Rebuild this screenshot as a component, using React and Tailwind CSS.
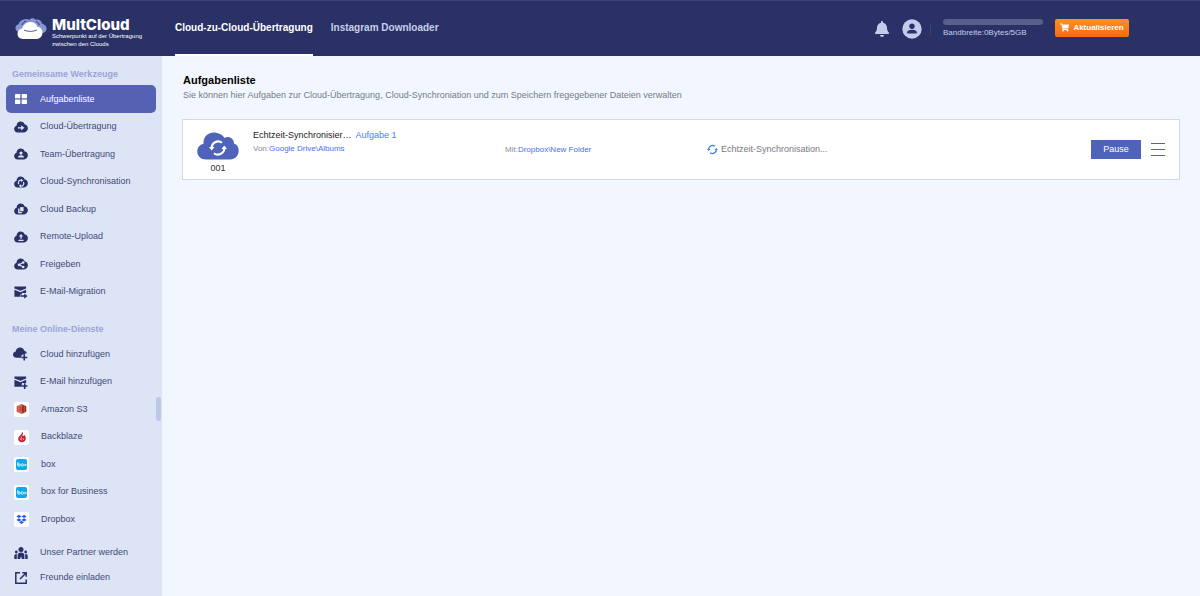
import React, { useState } from "react";
import { FaBell, FaShoppingCart } from "react-icons/fa";

const CLOUD =
  "M7.500.5c2.300 0 4 1.200 4.600 3.200 2.300.3 3.900 2.200 3.900 4.500 0 2.900-1.800 5.100-4.500 5.100H4.200C1.600 13.300 0 11.500 0 9.300c0-2 1.100-3.400 2.800-3.900C2.800 2.500 4.900.5 7.500.5z";

function CloudIcon({ children }) {
  return (
    <svg viewBox="0 0 16 14" className="w-[14px] h-[12px] text-[#2a3166]">
      <path d={CLOUD} fill="currentColor" />
      <g fill="none" stroke="#dde4f6" strokeWidth="1.600">{children}</g>
    </svg>
  );
}

function MailIcon({ children }) {
  return (
    <svg viewBox="0 0 15 15" className="w-[15px] h-[14px]">
      <path d="M1 1.500h12.500v2.200L7.500 6.200 1 3.700z" fill="#2a3166" />
      <path d="M1 5.200l6.500 2.500 6-2.500v3.300H9V12.500H1z" fill="#2a3166" />
      <g fill="none" stroke="#2a3166" strokeWidth="1.700">{children}</g>
    </svg>
  );
}

function GridIcon() {
  return (
    <svg viewBox="0 0 12 10" className="w-[12px] h-[10px]" fill="#fff">
      <rect width="5.300" height="4.300" rx=".4" />
      <rect x="6.700" width="5.300" height="4.300" rx=".4" />
      <rect y="5.600" width="5.300" height="4.300" rx=".4" />
      <rect x="6.700" y="5.600" width="5.300" height="4.300" rx=".4" />
    </svg>
  );
}

function CloudPlusIcon() {
  return (
    <svg viewBox="0 0 16 15" className="w-[15px] h-[14px]">
      <path d="M7.500.5c2.500 0 4.200 1.500 4.500 3.500 1.500.3 2.500 1.300 2.800 3H13v1.500h-3V11H8.500v.5H4C1.600 11.500 0 10.200 0 8.200c0-1.700 1.100-3 2.800-3.300C2.900 2.300 4.900.5 7.500.5z" fill="#2a3166" />
      <path d="M12 8v6.500M8.800 11.200h6.500" stroke="#dde4f6" strokeWidth="4" />
      <path d="M12 8v6.500M8.800 11.200h6.500" stroke="#2a3166" strokeWidth="1.700" />
    </svg>
  );
}

function Tile({ children }) {
  return (
    <span className="flex h-[15px] w-[15px] items-center justify-center rounded-[2px] bg-white">
      {children}
    </span>
  );
}

function S3Icon() {
  return (
    <Tile>
      <svg viewBox="0 0 12 12" className="h-[12px] w-[11px]">
        <path d="M.8 3L3 2v8L.8 9z" fill="#c8472f" />
        <path d="M11.200 3L9 2v8l2.200-1z" fill="#8c2a1b" />
        <path d="M3 1.800L6 .5v11L3 10.200z" fill="#e0604a" />
        <path d="M9 1.800L6 .5v11l3-1.300z" fill="#a83425" />
        <path d="M4.200 4.800h3.600M4.200 7.200h3.600" stroke="#7f2218" strokeWidth=".7" />
      </svg>
    </Tile>
  );
}

function BackblazeIcon() {
  return (
    <Tile>
      <svg viewBox="0 0 12 14" className="h-[12px] w-[10px]">
        <path d="M6.200.5c1.400 1.700 1 3 .4 4.300 0 1 .7 1.500 1.500.8.3-.3.400-.8.300-1.300 1.500 1.200 2.300 2.800 2.100 4.700-.3 2.500-2.200 4.300-4.700 4.300C3.200 13.300 1.300 11.400 1.500 9c.1-1.700 1.300-2.800 2.500-4C5.400 3.600 6.300 2.300 6.200.5z" fill="#c8202f" />
        <path d="M5 6.500c1 1.500-.6 2-.5 3.200.1.800.8 1.200 1.500 1M7.200 8.500c.8.800.6 1.600 0 2.200" stroke="#fff" strokeWidth=".9" fill="none" />
      </svg>
    </Tile>
  );
}

function BoxIcon() {
  return (
    <Tile>
      <span className="flex h-[11px] w-[11px] items-center justify-center rounded-[2px] bg-[#0aa9ea]">
        <svg viewBox="0 0 20 10" className="h-[5px] w-[10px]" fill="none" stroke="#fff" strokeWidth="1.600">
          <path d="M1.500 0v6" />
          <circle cx="4" cy="6" r="2.500" />
          <circle cx="10.500" cy="6" r="2.500" />
          <path d="M14.500 3.500l4.500 5M19 3.500l-4.500 5" />
        </svg>
      </span>
    </Tile>
  );
}

function DropboxIcon() {
  return (
    <Tile>
      <svg viewBox="0 0 12 11" className="h-[11px] w-[11px]" fill="#2458f0">
        <path d="M3.200.3L6 2.100 3.200 3.900.4 2.100zM8.800.3l2.800 1.800-2.800 1.800L6 2.100zM3.200 4.200L6 6 3.200 7.800.4 6zM8.800 4.200L11.600 6 8.800 7.800 6 6zM6 6.900l2.600 1.700L6 10.400 3.400 8.600z" />
      </svg>
    </Tile>
  );
}

function PartnerIcon() {
  return (
    <svg viewBox="0 0 14 12" className="h-[12px] w-[14px]" fill="#2a3166">
      <circle cx="7" cy="2.600" r="2.500" />
      <circle cx="2.300" cy="5" r="1.400" />
      <circle cx="11.700" cy="5" r="1.400" />
      <path d="M3.600 12V8.500c0-1.800 1.200-3 3.400-3s3.400 1.200 3.400 3V12H8L7 9.500 6 12zM.3 12V9c0-1.300.9-2.200 2.500-2.100V12zM13.700 12V9c0-1.300-.9-2.200-2.500-2.100V12z" />
    </svg>
  );
}

function InviteIcon() {
  return (
    <svg viewBox="0 0 12 12" className="h-[12px] w-[12px]" fill="none" stroke="#2a3166" strokeWidth="1.500">
      <path d="M5 .8H.8v10.400h10.400V7.500" />
      <path d="M5 7L11 1M7.200.8h4v4" />
    </svg>
  );
}

// two arrows running round in a circle
function SyncArrows({ className }) {
  return (
    <svg viewBox="0 0 20 20" className={className}>
      <path d="M3 10.500A7.200 7.200 0 0 1 14.500 4.200M17 9.500A7.200 7.200 0 0 1 5.500 15.800" fill="none" stroke="currentColor" strokeWidth="2.300" />
      <path d="M0 9h6.200L3 12.800zM20 11h-6.200L17 7.200z" fill="currentColor" />
    </svg>
  );
}

const tools = [
  { name: "Aufgabenliste", icon: <GridIcon /> },
  { name: "Cloud-Übertragung", icon: <CloudIcon><path d="M4.500 8h4.500" /><path d="M8.200 4.900L12 8l-3.800 3.100z" fill="#dde4f6" stroke="none" /></CloudIcon> },
  { name: "Team-Übertragung", icon: <CloudIcon><circle cx="8" cy="5.900" r="1.900" fill="#dde4f6" stroke="none" /><path d="M4.500 11c0-3.500 7-3.500 7 0z" fill="#dde4f6" stroke="none" /></CloudIcon> },
  { name: "Cloud-Synchronisation", icon: <CloudIcon><path d="M5.400 9.500A3 3 0 0 1 9 5M10.700 7a3 3 0 0 1-3.600 4.500" strokeWidth="1.400" /><path d="M8.200 3.200l2.500 2-2.500 1.800zM7.900 9.500l-2.500 2 2.500 1.800z" fill="#dde4f6" stroke="none" /></CloudIcon> },
  { name: "Cloud Backup", icon: <CloudIcon><path d="M5.500 6.500v4.700h3.500" /><path d="M7 4.800h4v4.800H7z" fill="#dde4f6" stroke="none" /></CloudIcon> },
  { name: "Remote-Upload", icon: <CloudIcon><path d="M8 5v4M5 11h6" /><path d="M5.500 6.500L8 3.500l2.500 3z" fill="#dde4f6" stroke="none" /></CloudIcon> },
  { name: "Freigeben", icon: <CloudIcon><path d="M10.500 5.300L5.800 7.900l4.700 2.600" strokeWidth="1.200" /><g fill="#dde4f6" stroke="none"><circle cx="10.600" cy="5.300" r="1.500" /><circle cx="5.800" cy="7.900" r="1.600" /><circle cx="10.600" cy="10.500" r="1.500" /></g></CloudIcon> },
  { name: "E-Mail-Migration", icon: <MailIcon><path d="M7.500 11.800H13" stroke="#dde4f6" strokeWidth="3.500" /><path d="M8 11.800H13" /><path d="M11.500 9l3.500 2.800-3.500 2.800z" fill="#2a3166" stroke="none" /></MailIcon> },
];

const services = [
  { name: "Cloud hinzufügen", icon: <CloudPlusIcon /> },
  { name: "E-Mail hinzufügen", icon: <MailIcon><path d="M12 8.500V15M9 11.800h6" stroke="#dde4f6" strokeWidth="3.500" /><path d="M12 8.800V15M9 11.800h6" /></MailIcon> },
  { name: "Amazon S3", icon: <S3Icon />, brand: true },
  { name: "Backblaze", icon: <BackblazeIcon />, brand: true },
  { name: "box", icon: <BoxIcon />, brand: true },
  { name: "box for Business", icon: <BoxIcon />, brand: true },
  { name: "Dropbox", icon: <DropboxIcon />, brand: true },
];

const more = [
  { name: "Unser Partner werden", icon: <PartnerIcon /> },
  { name: "Freunde einladen", icon: <InviteIcon /> },
];

function NavItem({ item, active, onClick }) {
  return (
    <li className="flex-1">
      <a
        href="#"
        onClick={onClick}
        className={`flex h-full items-center gap-3 rounded-[5px] pt-px text-[9px] ${item.brand ? "pl-2" : "pl-[7px]"} ${
          active ? "bg-[#5562b3] text-white" : "text-[#3f4a75]"
        }`}
      >
        <span className="flex w-[15px] justify-center">{item.icon}</span>
        {item.name}
      </a>
    </li>
  );
}

function Header() {
  return (
    <header className="flex h-14 items-stretch border-t border-[#3b4276] bg-[#2a3166] text-white">
      <a href="#" className="flex w-[175px] shrink-0 items-center gap-[5px] pl-[15px] pt-2">
        <svg viewBox="0 0 32 22" className="mb-2 h-[22px] w-[32px] shrink-0">
          <path d="M8.500 1.500c2-1 4.500-.5 5.500.5C16-.3 19.500 0 20.500 1.800c3-.8 6 .7 6.500 3.700 3 1 5 3.500 4.500 6C31 14 29 15 27 15L4 14C1.500 13.500 0 11.500.5 9.500.8 7.800 2 6.700 3.500 6.300 4 4 6 2 8.500 1.500z" fill="#8795d3" />
          <path d="M7 7C8 4.500 9.500 3.500 11.500 3M21 3.500c2 .8 3 2 3.300 3.500" stroke="#2a3166" fill="none" />
          <path d="M15.500 4c3.500 0 6 2 6.700 4.800 3.200.2 5.300 2.600 5.300 5.700 0 3.500-2.300 6.500-6 6.500H8c-3.500 0-5.500-2.400-5.500-5.200 0-2.900 2-5 4.700-5.300C8.300 6.500 11.500 4 15.500 4z" fill="#fff" />
          <path d="M9 12.200c4 1.600 9 1.600 12.800-.2" stroke="#2a3166" strokeWidth=".8" fill="none" />
        </svg>
        <span className="whitespace-nowrap">
          <span className="block font-['Inter',sans-serif] text-[15px] font-extrabold leading-[14px]">MultCloud</span>
          <span className="block text-[6px] leading-[8px]">
            Schwerpunkt auf der Übertragung
            <br />
            zwischen den Clouds
          </span>
        </span>
      </a>
      <nav className="flex gap-[18px] whitespace-nowrap text-[10px] font-bold">
        <a href="#" className="flex items-center border-b-2 border-white">Cloud-zu-Cloud-Übertragung</a>
        <a href="#" className="flex items-center border-b-2 border-transparent text-[#c6cfea]">Instagram Downloader</a>
      </nav>
      <div className="ml-auto flex items-center pr-[71px]">
        <button aria-label="Benachrichtigungen" className="mr-3">
          <FaBell className="h-4 w-4 text-[#c3cdeb]" />
        </button>
        <button aria-label="Konto">
          <svg viewBox="0 0 20 20" className="h-5 w-5">
            <circle cx="10" cy="10" r="9.700" fill="#c3cdeb" />
            <circle cx="10" cy="7.300" r="2.700" fill="#2a3166" />
            <path d="M5.200 14.500v-1c0-2 1.800-2.800 4.800-2.800s4.800.8 4.800 2.800v1z" fill="#2a3166" />
          </svg>
        </button>
        <span className="mx-2 h-[10px] w-px bg-[#3b4276]" />
        <div className="ml-1 w-[100px]">
          <div className="h-[6px] rounded-full bg-[#585f8b]" />
          <p className="mt-[3px] whitespace-nowrap text-[8px] leading-[10px] text-[#c6cfea]">Bandbreite:0Bytes/5GB</p>
        </div>
        <button className="mb-[2px] ml-3 flex h-[18px] w-[74px] items-center justify-center gap-1 rounded-[2px] bg-linear-to-b from-[#ff9020] to-[#fa6a14] text-[8px] font-bold">
          <FaShoppingCart className="h-[9px] w-[9px]" />
          Aktualisieren
        </button>
      </div>
    </header>
  );
}

function Sidebar() {
  const [current, setCurrent] = useState("Aufgabenliste");

  const renderItems = (items) =>
    items.map((item) => (
      <NavItem key={item.name} item={item} active={item.name === current} onClick={() => setCurrent(item.name)} />
    ));

  return (
    <aside className="relative w-[162px] shrink-0 bg-[#dde4f6] px-[6px] pt-3">
      <h2 className="pl-[6px] text-[9px] font-bold leading-[12px] text-[#9aa5d6]">Gemeinsame Werkzeuge</h2>
      <ul className="mt-[5px] flex h-[220px] flex-col">{renderItems(tools)}</ul>
      <h2 className="mt-[18px] pl-[6px] text-[9px] font-bold leading-[12px] text-[#9aa5d6]">Meine Online-Dienste</h2>
      <ul className="mt-[5px] flex h-[193px] flex-col">{renderItems(services)}</ul>
      <ul className="mt-[7px] flex h-[50px] flex-col">{renderItems(more)}</ul>
      <span className="absolute right-[1px] top-[341px] h-6 w-[5px] rounded-full bg-[#bcc8e6]" />
    </aside>
  );
}

function Task() {
  return (
    <article className="mt-[17px] flex h-[61px] items-center border border-[#cfd9ee] bg-white px-[14px]">
      <div className="flex w-[42px] flex-col items-center self-start pt-3">
        <div className="relative flex items-center justify-center text-white">
          <svg viewBox="0 0 42 28" className="h-[28px] w-[42px]">
            <path d="M16.500.5c5 0 9 2.300 11 5.500 4-2.500 9.500.5 9.500 5.500 3 .8 4.700 3.500 4.700 7 0 5-3.500 9-8.500 9H9C3.800 27.500.3 24 .3 19.500c0-4 2.500-7 6.200-7.800C6 5.500 10.500.5 16.500.5z" fill="#5063bb" />
          </svg>
          <SyncArrows className="absolute top-[7px] h-[18px] w-[18px]" />
        </div>
        <span className="text-[9px] leading-[16px] text-[#333]">001</span>
      </div>
      <div className="ml-[14px] w-[252px] shrink-0 self-start pt-2">
        <h3 className="flex gap-1 whitespace-nowrap text-[9px] leading-[14px]">
          <span className="text-[#222]">Echtzeit-Synchronisier…</span>
          <a href="#" className="text-[#4a7bff]">Aufgabe 1</a>
        </h3>
        <p className="text-[8px] leading-[14px] text-[#8a8f99]">
          Von:<a href="#" className="text-[#4a6ff5]">Google Drive\Albums</a>
        </p>
      </div>
      <p className="w-[202px] shrink-0 text-[8px] text-[#8a8f99]">
        Mit:<a href="#" className="text-[#4a6ff5]">Dropbox\New Folder</a>
      </p>
      <p className="flex items-center gap-[3px] text-[9px] text-[#757a85]">
        <SyncArrows className="h-[11px] w-[11px] text-[#2f7df6]" />
        Echtzeit-Synchronisation...
      </p>
      <button className="ml-auto h-[19px] w-[50px] bg-[#5063bb] text-[9px] text-white">Pause</button>
      <button aria-label="Menü" className="ml-[10px] flex w-[14px] flex-col gap-[5px]">
        <span className="h-px w-full bg-[#5063bb]" />
        <span className="h-px w-full bg-[#5063bb]" />
        <span className="h-px w-full bg-[#5063bb]" />
      </button>
    </article>
  );
}

export default function App() {
  return (
    <div className="flex min-h-screen flex-col bg-[#f2f7ff] font-['Liberation_Sans',sans-serif]">
      <Header />
      <div className="flex flex-1">
        <Sidebar />
        <main className="flex-1 px-5 pt-4">
          <h1 className="pl-px text-[11px] font-bold leading-[16px] text-black">Aufgabenliste</h1>
          <p className="pl-px text-[9px] leading-[14px] text-[#757a85]">
            Sie können hier Aufgaben zur Cloud-Übertragung, Cloud-Synchroniation und zum Speichern fregegebener Dateien verwalten
          </p>
          <Task />
        </main>
      </div>
    </div>
  );
}
